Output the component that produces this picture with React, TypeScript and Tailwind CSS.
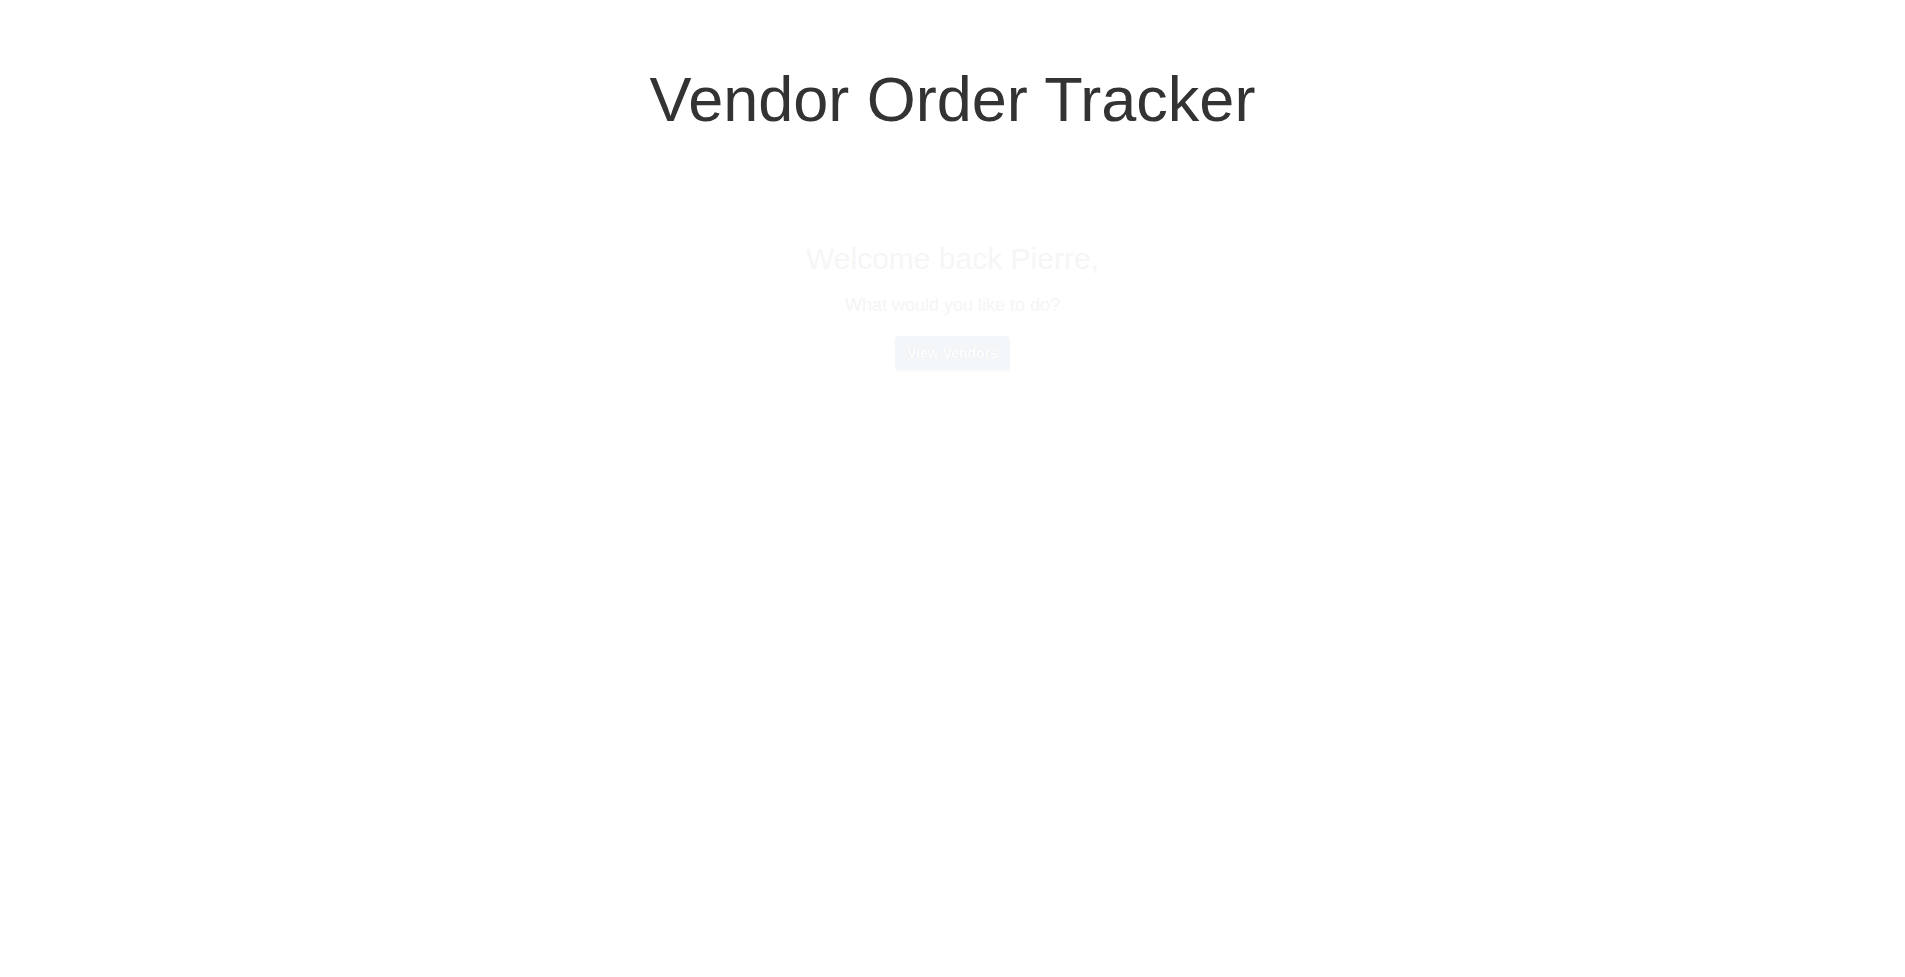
const App = () => {
  return (
    <div className="min-h-screen bg-white text-center" style={{ fontFamily: '"Liberation Sans", Arial, sans-serif' }}>
      <div className="pt-[63px]">
        <h1 className="text-[63px] leading-[73px] text-[#333333]">Vendor Order Tracker</h1>
      </div>

      {/* welcome block, fading in */}
      <div className="mt-[106px] flex flex-col items-center">
        <h2 className="text-[30px] leading-[34px] text-[#f6f6f6]">Welcome back Pierre,</h2>
        <p className="mt-[19px] text-[18px] leading-[21px] text-[#f5f5f5]">What would you like to do?</p>
        <button className="mt-[20px] rounded-[4px] bg-[#f4f7fa] px-3 py-2 text-[14px] font-bold leading-[18px] text-white shadow-[0_1px_2px_rgba(0,0,0,0.03)] [text-shadow:0_0_1px_rgba(0,0,0,0.1)]">
          View Vendors
        </button>
      </div>
    </div>
  );
};

export default App;
